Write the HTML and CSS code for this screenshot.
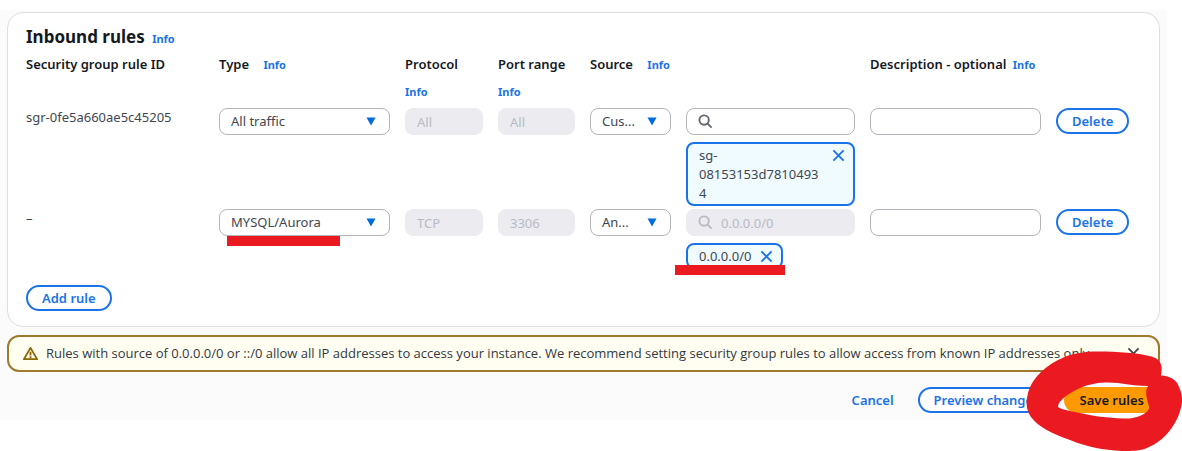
FILE: index.html
```html
<!DOCTYPE html>
<html lang="en">
<head>
<meta charset="utf-8">
<title>Edit inbound rules</title>
<link rel="stylesheet" href="styles.css">
</head>
<body>
<svg class="defs" aria-hidden="true">
  <symbol id="caret" viewBox="0 0 10 9"><path d="M0.5 0.5h9L5 8.5z" fill="#006ce0"/></symbol>
  <symbol id="search" viewBox="0 0 16 16"><circle cx="6.5" cy="6.5" r="5" fill="none" stroke="currentColor" stroke-width="2"/><path d="M10 10l4.5 4.5" stroke="currentColor" stroke-width="2"/></symbol>
  <symbol id="close" viewBox="0 0 14 14"><path d="M1.5 1.5l11 11M12.500 1.500l-11 11" stroke="currentColor" stroke-width="2" fill="none"/></symbol>
</svg>
<main class="page">
  <section class="card">
    <h2 class="title">Inbound rules <a class="info" href="#">Info</a></h2>
    <div class="grid head">
      <div class="label">Security group rule ID</div>
      <div class="label spaced">Type <a class="info" href="#">Info</a></div>
      <div class="label stacked">Protocol <a class="info" href="#">Info</a></div>
      <div class="label stacked">Port range <a class="info" href="#">Info</a></div>
      <div class="label spaced">Source <a class="info" href="#">Info</a></div>
      <div class="label">Description - optional <a class="info" href="#">Info</a></div>
    </div>
    <div class="grid row">
      <div class="rule-id">sgr-0fe5a660ae5c45205</div>
      <div class="select"><select class="control" aria-label="Type"><option>All traffic</option></select><svg class="caret"><use href="#caret"/></svg></div>
      <input class="control" aria-label="Protocol" value="All" disabled>
      <input class="control" aria-label="Port range" value="All" disabled>
      <div class="source">
        <div class="select"><select class="control" aria-label="Source type"><option>Cus...</option></select><svg class="caret"><use href="#caret"/></svg></div>
        <div class="lookup">
          <div class="search"><input class="control" type="text" aria-label="Source"><svg class="glass"><use href="#search"/></svg></div>
          <div class="tag wide"><span class="tag-text">sg-08153153d78104934</span><button class="close" aria-label="Remove"><svg><use href="#close"/></svg></button></div>
        </div>
      </div>
      <input class="control" type="text" aria-label="Description">
      <button class="button delete">Delete</button>
    </div>
    <div class="grid row">
      <div class="rule-id">–</div>
      <div class="select"><select class="control" aria-label="Type"><option>MYSQL/Aurora</option></select><svg class="caret"><use href="#caret"/></svg><span class="mark mark-type"></span></div>
      <input class="control" aria-label="Protocol" value="TCP" disabled>
      <input class="control" aria-label="Port range" value="3306" disabled>
      <div class="source">
        <div class="select"><select class="control" aria-label="Source type"><option>An...</option></select><svg class="caret"><use href="#caret"/></svg></div>
        <div class="lookup">
          <div class="search off"><input class="control" type="text" aria-label="Source" value="0.0.0.0/0" disabled><svg class="glass"><use href="#search"/></svg></div>
          <div class="tag"><span class="tag-text">0.0.0.0/0</span><button class="close" aria-label="Remove"><svg><use href="#close"/></svg></button><span class="mark mark-source"></span></div>
        </div>
      </div>
      <input class="control" type="text" aria-label="Description">
      <button class="button delete">Delete</button>
    </div>
    <button class="button add">Add rule</button>
  </section>
  <div class="alert" role="alert">
    <svg class="warn" viewBox="0 0 16 16"><path d="M8 2L15 14H1z" fill="none" stroke="#8d6605" stroke-width="2" stroke-linejoin="round"/><path d="M8 6v4M8 11v2" stroke="#8d6605" stroke-width="2"/></svg>
    <p class="message">Rules with source of 0.0.0.0/0 or ::/0 allow all IP addresses to access your instance. We recommend setting security group rules to allow access from known IP addresses only.</p>
    <button class="close dismiss" aria-label="Dismiss"><svg><use href="#close"/></svg></button>
  </div>
  <div class="actions">
    <button class="button plain">Cancel</button>
    <button class="button preview">Preview changes</button>
    <div class="save">
      <button class="button primary">Save rules</button>
      <svg class="ring" viewBox="1026 350 156 101" aria-hidden="true"><path fill="#eb1920" fill-rule="evenodd" d="M1027 398C1029 382 1041 369 1058 360C1073 352 1088 351 1105 351.500C1126 352 1144 354 1153 357C1161 360 1163 366 1161 375.500C1170 376 1177 380 1179 387C1182 393 1182 398 1182 402C1180 420 1167 440 1147 448C1140 451 1132 451 1122 451C1103 450 1087 447 1070 440C1053 434 1038 427 1031 417C1027 411 1026 405 1027 398ZM1058 407C1058 401 1067 394 1080 388C1094 382 1107 382 1118 383C1130 385 1140 386 1148 386C1145 390 1146 397 1149 406C1150 410 1146 413 1142 415C1135 418 1129 419 1123 418.500C1108 418 1092 416 1080 413C1069 411 1060 409 1058 407Z"/></svg>
    </div>
  </div>
</main>
</body>
</html>
```
FILE: styles.css
```css
* { box-sizing: border-box; }
body {
  margin: 0;
  padding-top: 10px;
  min-height: 100vh;
  background: #fff;
  color: #16191f;
  font: 13px/19px "Noto Sans", "Open Sans", sans-serif;
}
button, input, select { font: inherit; color: inherit; margin: 0; }
a { color: #1a73e8; text-decoration: none; }
.defs { position: absolute; width: 0; height: 0; }
.page {
  margin-right: 15px;
  padding: 2px 7px 7px;
  background: #fbfbfb;
}
.card {
  padding: 12px 14px 15px 18px;
  background: #fff;
  border: 1px solid #dedee3;
  border-radius: 16px;
}
.title { margin: 0; font-size: 17px; line-height: 24px; font-weight: 700; }
.info { margin-left: 3px; font-size: 11px; line-height: 16px; font-weight: 700; }
.grid {
  display: grid;
  grid-template-columns: 178fr 171fr 78fr 77fr 265fr 171fr 89fr;
  gap: 15px;
  align-items: start;
}
.label { font-weight: 600; line-height: 27px; white-space: nowrap; }
.spaced .info { margin-left: 11px; }
.stacked .info { display: block; margin: 0; line-height: 27px; }
.head { margin-top: 2px; }
.row { margin-top: 3px; color: #414750; }
.control {
  display: block;
  width: 100%;
  min-width: 0;
  height: 27px;
  padding: 0 11px;
  border: 1px solid #b4b4bb;
  border-radius: 8px;
  background: #fff;
  appearance: none;
}
.control:disabled { background: #ebebf0; border-color: #ebebf0; color: #b8bac4; opacity: 1; }
.select, .search { position: relative; min-width: 0; }
.caret { position: absolute; right: 14px; top: 9px; width: 10px; height: 9px; pointer-events: none; }
.source { display: grid; grid-template-columns: 81fr 169fr; gap: 15px; align-items: start; }
.search { width: 100%; }
.search .control { padding-left: 34px; }
.glass { position: absolute; left: 12px; top: 6px; width: 15px; height: 15px; color: #656871; }
.off .glass { color: #b8bac4; }
.lookup { display: flex; flex-direction: column; align-items: flex-start; gap: 7px; min-width: 0; }
.tag {
  position: relative;
  display: flex;
  align-items: flex-start;
  gap: 9px;
  padding: 2px 8px 1px 11px;
  border: 2px solid #1a73e8;
  border-radius: 8px;
  background: #f0fbff;
}
.wide { width: 100%; }
.tag-text { flex: 1; overflow-wrap: anywhere; }
.close { flex: none; padding: 3px 0; border: 0; background: none; color: #1a73e8; line-height: 0; }
.close svg { width: 13px; height: 13px; }
.button {
  height: 26px;
  padding: 0 14px;
  border: 2px solid #1a73e8;
  border-radius: 13px;
  background: #fff;
  color: #1a73e8;
  font-weight: 600;
  line-height: 20px;
  white-space: nowrap;
}
.delete { justify-self: start; }
.add { display: block; margin-top: 16px; }
.alert {
  display: flex;
  align-items: center;
  gap: 8px;
  margin-top: 8px;
  padding: 7px 18px 7px 14px;
  border: 2px solid #a07a2c;
  border-radius: 12px;
  background: #fffef0;
  color: #333843;
}
.warn { flex: none; width: 15px; height: 15px; }
.message { flex: 1; margin: 0; font-family: "Open Sans", "Noto Sans", sans-serif; white-space: nowrap; }
.dismiss { color: #424650; }
.actions { display: flex; justify-content: flex-end; gap: 8px; margin-top: 15px; }
.plain { border-color: transparent; background: none; }
.save { position: relative; }
.primary { border-color: #ff9900; background: #ff9900; color: #16191f; }
.mark { position: absolute; height: 10px; background: #eb1920; }
.mark-type { left: 8px; right: 50px; top: 27px; }
.mark-source { left: -13px; right: -4px; top: 20px; }
.ring { position: absolute; right: -22px; top: -37px; width: 156px; height: 101px; pointer-events: none; }
```
